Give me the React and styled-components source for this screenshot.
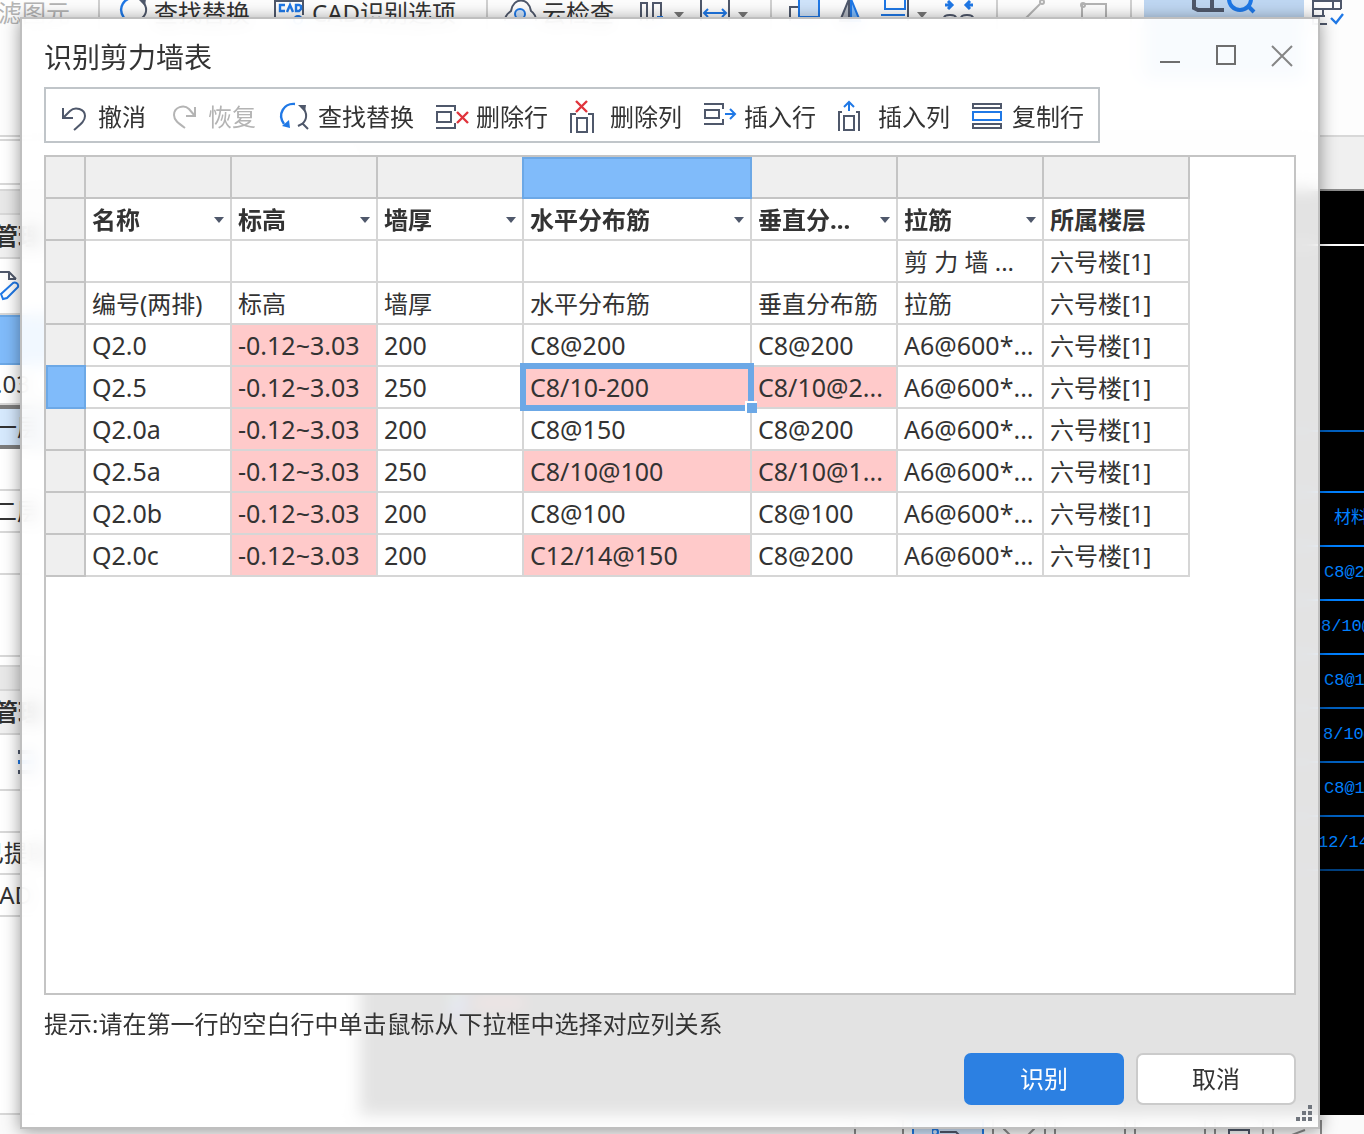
import React from "react";
import styled, { createGlobalStyle, css } from "styled-components";

const INK = "#333333";
const SLATE = "#4f586b";
const BLUE = "#1f78e6";
const RED = "#e0343c";
const FAINT = "#b4b4b4";

const GlobalStyle = createGlobalStyle`
  * {
    box-sizing: border-box;
  }
  body {
    margin: 0;
    color: ${INK};
    font: 24px/32px "Noto Sans", "Noto Sans CJK SC", sans-serif;
  }
  button, select {
    margin: 0;
    padding: 0;
    border: 0;
    background: none;
    color: inherit;
    font: inherit;
  }
`;

/* ---------- main window ---------- */

const Desktop = styled.div`
  position: relative;
  display: flex;
  flex-direction: column;
  height: 100vh;
  min-height: 900px;
  overflow: hidden;
  background: #fff;
`;

const Ribbon = styled.div`
  display: flex;
  align-items: flex-start;
  height: 137px;
  flex: none;
  border-bottom: 2px solid #d8d8d8;
  background: #fdfdfd;
`;

const RibbonButton = styled.button`
  display: flex;
  flex: none;
  align-items: center;
  gap: 4px;
  height: 26px;
  margin-left: ${({ $gap }) => $gap}px;
  color: ${({ disabled }) => (disabled ? FAINT : INK)};
  white-space: nowrap;
`;

const RibbonRule = styled.span`
  flex: none;
  width: 2px;
  height: 80px;
  margin-left: ${({ $gap }) => $gap}px;
  background: #d0d0d0;
`;

const RibbonActive = styled.button`
  display: flex;
  flex: none;
  justify-content: center;
  width: 160px;
  height: 80px;
  margin-left: 12px;
  background: #bfd7f2;
`;

const Workspace = styled.div`
  display: flex;
  flex: 1;
  min-height: 0;
`;

const Side = styled.div`
  display: flex;
  flex: none;
  flex-direction: column;
  width: 392px;
  margin-left: -32px;
`;

const sideTones = {
  plain: "#fff",
  bar: "#e8e8e8",
  head: "#f0f0f0",
  picked: "#80bbfa",
  current: "#d6e9fd"
};

const SideRow = styled.div`
  display: flex;
  align-items: center;
  flex: none;
  height: ${({ $h }) => $h}px;
  padding-left: ${({ $pad }) => $pad || 0}px;
  border-bottom: 2px solid #d8d8d8;
  background: ${({ $tone }) => sideTones[$tone || "plain"]};
  font-weight: ${({ $tone }) => ($tone === "head" ? 700 : 400)};
  white-space: nowrap;
  ${({ $tone }) =>
    $tone === "picked" && css`border: 2px solid #6ca8e6;`}
  ${({ $tone }) =>
    $tone === "current" &&
    css`
      border-top: 4px solid #7d7d7d;
      border-bottom: 4px solid #7d7d7d;
    `}
`;

const SideFill = styled.div`
  flex: 1;
  border-bottom: 2px solid #d8d8d8;
`;

const Main = styled.div`
  display: flex;
  flex: 1;
  flex-direction: column;
  min-width: 0;
`;

const TabStrip = styled.div`
  flex: none;
  height: 54px;
  border-bottom: 2px solid #8c8c8c;
  background: #f0f0f0;
`;

const Canvas = styled.div`
  position: relative;
  flex: 1;
  overflow: hidden;
  background: #000;
  color: #0080ff;
  font: 17px/20px "Liberation Mono", "Noto Sans CJK SC", monospace;
`;

const CanvasRow = styled.div`
  display: flex;
  align-items: center;
  justify-content: flex-end;
  height: ${({ $h }) => $h}px;
  border-bottom: 2px solid ${({ $line }) => $line || "#0080ff"};
`;

const CanvasText = styled.span`
  width: ${({ $w }) => $w}px;
  white-space: nowrap;
`;

const Axis = styled.svg`
  position: absolute;
  left: 80px;
  bottom: 86px;
`;

const StatusBar = styled.div`
  display: flex;
  flex: none;
  align-items: flex-end;
  justify-content: flex-end;
  gap: 8px;
  height: 19px;
  padding-right: 42px;
  background: #fafafa;
`;

const StatusButton = styled.button`
  display: flex;
  justify-content: center;
  width: ${({ $w }) => $w}px;
  height: 14px;
  border: 2px solid ${({ $on }) => ($on ? BLUE : "#8a8a8a")};
  border-width: 0 2px;
  background: ${({ $on }) => ($on ? "#cfe3fa" : "transparent")};
`;

/* ---------- dialog ---------- */

const Dialog = styled.section`
  position: absolute;
  top: 17px;
  right: 44px;
  bottom: 5px;
  left: 20px;
  display: flex;
  flex-direction: column;
  padding: 0 22px 22px;
  border: 2px solid #bfbfbf;
  background: rgba(255, 255, 255, 0.89);
  backdrop-filter: blur(8px);
  box-shadow: 0 2px 16px rgba(0, 0, 0, 0.4);
`;

const TitleBar = styled.header`
  display: flex;
  align-items: center;
  justify-content: space-between;
  flex: none;
  height: 68px;
  padding-top: 6px;
`;

const Title = styled.h1`
  margin: 0;
  padding-top: 2px;
  font-size: 28px;
  font-weight: 400;
  line-height: 36px;
`;

const WindowButtons = styled.div`
  display: flex;
  gap: 32px;
  padding-right: 2px;
`;

const WindowButton = styled.button`
  width: 24px;
  height: 24px;
  svg {
    display: block;
  }
`;

const Toolbar = styled.div`
  display: flex;
  align-self: flex-start;
  align-items: center;
  flex: none;
  gap: 22px;
  height: 56px;
  padding: 0 14px 0 12px;
  border: 2px solid #c0c5c9;
  background: #fff;
`;

const Tool = styled.button`
  display: flex;
  align-items: center;
  gap: 8px;
  color: ${({ disabled }) => (disabled ? FAINT : INK)};
  white-space: nowrap;
  svg {
    flex: none;
    overflow: visible;
  }
`;

const ToolLabel = styled.span`
  padding-top: 4px;
`;

const GridBox = styled.div`
  flex: 1;
  min-height: 0;
  margin-top: 12px;
  overflow: hidden;
  border: 2px solid #c4c4c4;
  background: #fff;
`;

const Table = styled.table`
  width: 1144px;
  border-spacing: 0;
  border-collapse: separate;
  table-layout: fixed;
  text-align: left;
`;

const pickedFrame = css`
  background: #80bbfa;
  &::after {
    content: "";
    position: absolute;
    inset: ${({ $picked }) =>
      $picked === "column" ? "0 -2px -2px" : "-2px -2px -2px 0"};
    z-index: 1;
    border: 2px solid #6ca8e6;
  }
`;

const Stub = styled.th`
  position: relative;
  height: 42px;
  padding: 0;
  border: 0 solid #c4c4c4;
  border-width: 0 2px 2px 0;
  background: #efefef;
  ${({ $picked }) => $picked && pickedFrame}
`;

const Cell = styled.td`
  position: relative;
  height: 42px;
  padding: ${({ $latin }) => ($latin ? 0 : 2)}px 0 0 6px;
  border: 0 solid #d6d6d6;
  border-width: 0 2px 2px 0;
  background: ${({ $bad }) => ($bad ? "#ffcaca" : "#fff")};
  font-size: ${({ $latin }) => ($latin ? 25 : 24)}px;
  font-weight: ${({ as }) => (as === "th" ? 700 : 400)};
  white-space: nowrap;
`;

const Frame = styled.span`
  position: absolute;
  inset: -4px;
  z-index: 2;
  border: 6px solid #6ca8e6;
  &::after {
    content: "";
    position: absolute;
    right: -9px;
    bottom: -8px;
    width: 10px;
    height: 10px;
    border: 0 solid #fff;
    border-width: 2px 0 0 2px;
    background: #6ca8e6;
  }
`;

const Picker = styled.select`
  display: block;
  width: 100%;
  height: 38px;
  appearance: none;
  outline: 0;
  font-weight: 700;
`;

const Caret = styled.svg`
  position: absolute;
  top: 18px;
  right: 6px;
  pointer-events: none;
`;

const Hint = styled.p`
  display: flex;
  align-items: center;
  flex: none;
  height: 58px;
  margin: 0;
`;

const Actions = styled.footer`
  display: flex;
  flex: none;
  justify-content: flex-end;
  gap: 12px;
`;

const ActionButton = styled.button`
  width: 160px;
  height: 52px;
  border: 2px solid ${({ $primary }) => ($primary ? "#2c80e2" : "#cbcbcb")};
  border-radius: 7px;
  background: ${({ $primary }) => ($primary ? "#2c80e2" : "#fff")};
  color: ${({ $primary }) => ($primary ? "#fff" : INK)};
`;

const Grip = styled.svg`
  position: absolute;
  right: 6px;
  bottom: 6px;
`;

/* ---------- icons ---------- */

const Icon = ({ w = 32, h = 32, children, color = SLATE }) => (
  <svg
    width={w}
    height={h}
    viewBox={`0 0 ${w} ${h}`}
    fill="none"
    stroke={color}
    strokeWidth="2"
    aria-hidden="true"
  >
    {children}
  </svg>
);

const UndoIcon = () => (
  <Icon>
    <path d="M5 9v10h10M5 19l7-7c5-5 15-2 15 5 0 5-4 8-11 14" />
  </Icon>
);

const RedoIcon = () => (
  <Icon color={FAINT}>
    <path d="M27 8v9h-9M27 17l-6-7c-5-5-15-2-15 6 0 5 4 8 11 13" />
  </Icon>
);

const FindIcon = () => (
  <Icon>
    <path d="M17 5C6 4-1 15 6 25" stroke={BLUE} strokeWidth="2.4" />
    <path d="M4 27l8 2-1-8z" fill={BLUE} stroke="none" />
    <path d="M20 6h8l-1 7z" fill={SLATE} stroke="none" />
    <path d="M24 8c6 6 5 13 0 17l-4 2M24 24l6 6" />
  </Icon>
);

const DeleteRowIcon = () => (
  <Icon>
    <path d="M0 7h19v5M0 29h19v-5M1 13h14v10H1z" />
    <path d="M21 13l11 11M32 13L21 24" stroke={RED} strokeWidth="2.4" />
  </Icon>
);

const DeleteColumnIcon = () => (
  <Icon>
    <path d="M1 34V15h5M23 34V15h-5M7 19h10v14H7z" />
    <path d="M6 2l11 11M17 2L6 13" stroke={RED} strokeWidth="2.4" />
  </Icon>
);

const InsertRowIcon = () => (
  <Icon>
    <path d="M0 5h19v5M0 25h19v-5M1 11h14v8H1z" />
    <path d="M21 15h9M26 10l5 5-5 5" stroke={BLUE} />
  </Icon>
);

const InsertColumnIcon = () => (
  <Icon>
    <path d="M1 32V13h3M21 32V13h-3M6 17h10v14H6z" />
    <path d="M11 12V3M6 8l5-5 5 5" stroke={BLUE} />
  </Icon>
);

const CopyRowIcon = () => (
  <Icon>
    <path d="M1 5h28v4H1zM1 25h28v4H1z" />
    <path d="M1 13h28v8H1z" stroke={BLUE} />
  </Icon>
);

const DropArrow = () => (
  <svg width="10" height="24" aria-hidden="true">
    <path d="M0 11h10l-5 6z" fill="#777" />
  </svg>
);

/* ---------- data ---------- */

const tools = [
  ["撤消", UndoIcon],
  ["恢复", RedoIcon, true],
  ["查找替换", FindIcon],
  ["删除行", DeleteRowIcon],
  ["删除列", DeleteColumnIcon],
  ["插入行", InsertRowIcon],
  ["插入列", InsertColumnIcon],
  ["复制行", CopyRowIcon]
];

const columns = [
  "名称",
  "标高",
  "墙厚",
  "水平分布筋",
  "垂直分...",
  "拉筋",
  "所属楼层"
];

const FLOOR = "六号楼[1]";
const LEVEL = "-0.12~3.03";
const TIE = "A6@600*...";

// bad: column indexes whose value could not be parsed
const rows = [
  { cells: ["", "", "", "", "", "剪 力 墙 ...", FLOOR] },
  {
    cells: ["编号(两排)", "标高", "墙厚", "水平分布筋", "垂直分布筋", "拉筋", FLOOR]
  },
  { cells: ["Q2.0", LEVEL, "200", "C8@200", "C8@200", TIE, FLOOR], bad: [1] },
  {
    cells: ["Q2.5", LEVEL, "250", "C8/10-200", "C8/10@2...", TIE, FLOOR],
    bad: [1, 3, 4],
    active: 3
  },
  { cells: ["Q2.0a", LEVEL, "200", "C8@150", "C8@200", TIE, FLOOR], bad: [1] },
  {
    cells: ["Q2.5a", LEVEL, "250", "C8/10@100", "C8/10@1...", TIE, FLOOR],
    bad: [1, 3, 4]
  },
  { cells: ["Q2.0b", LEVEL, "200", "C8@100", "C8@100", TIE, FLOOR], bad: [1] },
  {
    cells: ["Q2.0c", LEVEL, "200", "C12/14@150", "C8@200", TIE, FLOOR],
    bad: [1, 3]
  }
];

const drawing = [
  ["材料", 30, 54],
  ["C8@2", 40, 54],
  ["8/10@", 43, 54],
  ["C8@1", 40, 54, "#0060c0"],
  ["8/10@", 41, 54, "#0060c0"],
  ["C8@1", 40, 54, "#0060c0"],
  ["12/14", 46, 54, "#004080"]
];

const isLatin = text => /^[\x20-\x7e]+$/.test(text);

/* ---------- parts ---------- */

const MainRibbon = () => (
  <Ribbon>
    <RibbonButton $gap={-26} disabled>
      过滤图元
    </RibbonButton>
    <RibbonRule $gap={28} />
    <RibbonButton $gap={18}>
      <Icon>
        <path d="M17 1C6 0-1 11 6 21" stroke={BLUE} strokeWidth="2.4" />
        <path d="M20 2h8l-1 7z" fill={SLATE} stroke="none" />
        <path d="M24 4c6 6 5 13 0 17" />
      </Icon>
      查找替换
    </RibbonButton>
    <RibbonButton $gap={24}>
      <Icon w={34}>
        <path d="M1 22V4h28v14" />
        <path
          d="M11 8H6v6h5M13 15l3-7 3 7M22 8v6h3l2-2V9l-2-1z"
          stroke={BLUE}
          strokeWidth="2.4"
        />
        <circle cx="24" cy="23" r="4" stroke={BLUE} />
      </Icon>
      CAD识别选项
    </RibbonButton>
    <RibbonRule $gap={30} />
    <RibbonButton $gap={16}>
      <Icon w={34}>
        <path d="M1 24c0-7 4-8 6-10C9 0 25 0 27 14c3 2 5 4 5 10" />
        <circle cx="16" cy="17" r="5" stroke={BLUE} fill="#cfe3fa" />
      </Icon>
      云检查
    </RibbonButton>
    <RibbonButton $gap={26} aria-label="复制">
      <Icon w={24}>
        <path d="M1 24V6h6v18M13 24V6h8v14" />
        <path d="M17 20h6" stroke={BLUE} />
      </Icon>
    </RibbonButton>
    <RibbonButton $gap={10} aria-label="更多">
      <DropArrow />
    </RibbonButton>
    <RibbonButton $gap={16} aria-label="延伸">
      <Icon w={30}>
        <path d="M1 0v24M29 0v24" />
        <path d="M4 16h22M8 12l-4 4 4 4M22 12l4 4-4 4" stroke={BLUE} />
      </Icon>
    </RibbonButton>
    <RibbonButton $gap={8} aria-label="更多">
      <DropArrow />
    </RibbonButton>
    <RibbonRule $gap={22} />
    <RibbonButton $gap={17} aria-label="移动">
      <Icon w={32}>
        <path d="M1 24V10h8" />
        <path d="M10 0v20h20V0" stroke={BLUE} fill="#cfe3fa" />
      </Icon>
    </RibbonButton>
    <RibbonButton $gap={18} aria-label="镜像">
      <Icon w={24}>
        <path d="M10 2v22H1z" fill="#b4b9c2" />
        <path d="M12 2v22h9z" stroke={BLUE} fill="#80bbfa" />
      </Icon>
    </RibbonButton>
    <RibbonButton $gap={18} aria-label="对齐">
      <Icon w={28}>
        <path d="M4 0v12h20V0M0 18h24" stroke={BLUE} />
        <path d="M27 0v24" />
      </Icon>
    </RibbonButton>
    <RibbonButton $gap={8} aria-label="更多">
      <DropArrow />
    </RibbonButton>
    <RibbonButton $gap={16} aria-label="合并">
      <Icon w={32}>
        <path
          d="M2 8h6M30 8h-6M5 4l4 4-4 4M27 4l-4 4 4 4"
          stroke={BLUE}
          strokeWidth="3"
        />
        <path d="M1 21c0-4 12-4 12 0M18 21c0-4 12-4 12 0" />
      </Icon>
    </RibbonButton>
    <RibbonRule $gap={21} />
    <RibbonButton $gap={24} disabled aria-label="直线">
      <Icon w={24} color={FAINT}>
        <path d="M1 24L18 7" />
        <circle cx="20" cy="5" r="2" />
      </Icon>
    </RibbonButton>
    <RibbonButton $gap={34} disabled aria-label="矩形">
      <Icon w={28} color={FAINT}>
        <path d="M2 24V7h24v17" />
        <circle cx="3" cy="8" r="2" />
      </Icon>
    </RibbonButton>
    <RibbonRule $gap={22} />
    <RibbonActive aria-label="识别剪力墙">
      <Icon w={64}>
        <path d="M2 0v8l4 2h26M20 0v10" strokeWidth="4" />
        <circle cx="48" cy="-1" r="11" stroke={BLUE} strokeWidth="4" />
        <path d="M56 6l6 6" stroke={BLUE} strokeWidth="4" />
      </Icon>
    </RibbonActive>
    <RibbonButton $gap={8} aria-label="校核">
      <Icon>
        <path d="M1 2v25h14M1 4h28v8M1 12h28M1 19h12M21 4v8M11 12v7" />
        <path d="M19 21l5 5 7-9" stroke={BLUE} strokeWidth="2.4" />
      </Icon>
    </RibbonButton>
  </Ribbon>
);

const SidePanel = () => (
  <Side>
    <SideRow $h={4} />
    <SideRow $h={44} />
    <SideRow $h={6} />
    <SideRow $h={24} $tone="bar" />
    <SideRow $h={44} $tone="head" $pad={26}>
      管理
    </SideRow>
    <SideRow $h={56} $pad={32}>
      <Icon>
        <path d="M0 2h9l7 7M9 2v7h7" />
        <path d="M1 24l2 5 4-1 11-11c1-4-3-5-5-4z" stroke={BLUE} />
      </Icon>
    </SideRow>
    <SideRow $h={50} $tone="picked" />
    <SideRow $h={40} $pad={28}>
      .03
    </SideRow>
    <SideRow $h={44} $tone="current" $pad={25}>
      一层
    </SideRow>
    <SideRow $h={42} />
    <SideRow $h={42} $pad={25}>
      二层
    </SideRow>
    <SideRow $h={42} />
    <SideRow $h={82} />
    <SideRow $h={10} />
    <SideRow $h={24} $tone="bar" />
    <SideRow $h={44} $tone="head" $pad={26}>
      管理
    </SideRow>
    <SideRow $h={56} $pad={50}>
      <Icon>
        <path d="M0 6h20M0 26h20" strokeWidth="4" />
        <path d="M0 16h20" stroke={BLUE} strokeWidth="4" />
      </Icon>
    </SideRow>
    <SideRow $h={42} />
    <SideRow $h={42} $pad={12}>
      已提取
    </SideRow>
    <SideRow $h={42} $pad={16}>
      CAD
    </SideRow>
    <SideFill />
  </Side>
);

const Drawing = () => (
  <Canvas>
    <CanvasRow $h={55} $line="#fff" />
    <CanvasRow $h={186} $line="#0060c0" />
    <CanvasRow $h={61} />
    {drawing.map(([text, w, h, line], i) => (
      <CanvasRow key={i} $h={h} $line={line}>
        <CanvasText $w={w}>{text}</CanvasText>
      </CanvasRow>
    ))}
    <Axis width="110" height="60" fill="none" strokeWidth="4">
      <path d="M14 50V4" stroke="#2fe02f" />
      <path d="M14 50L22 26" stroke="#3030ff" strokeWidth="8" />
      <path d="M34 34H84" stroke="#ff3030" strokeWidth="6" />
    </Axis>
  </Canvas>
);

const StatusIcons = () => (
  <StatusBar>
    <StatusButton $w={50} aria-label="捕捉" />
    <StatusButton $w={72} $on aria-label="正交">
      <Icon h={14}>
        <path d="M8 12h16l8 8" />
        <circle cx="3" cy="12" r="3" stroke={BLUE} />
      </Icon>
    </StatusButton>
    <StatusButton $w={54} aria-label="交点">
      <Icon h={14} color="#8a8a8a">
        <path d="M0 8l8 8M32 8l-8 8" />
      </Icon>
    </StatusButton>
    <StatusButton $w={72} aria-label="垂点" />
    <StatusButton $w={72} aria-label="中点" />
    <StatusButton $w={50} aria-label="顶点">
      <Icon w={24} h={14}>
        <path d="M2 14v-4h20v4" />
      </Icon>
    </StatusButton>
    <StatusButton $w={50} aria-label="坐标">
      <Icon w={24} h={14} color="#8a8a8a">
        <path d="M4 16l16-6" />
      </Icon>
    </StatusButton>
  </StatusBar>
);

const WallGrid = () => (
  <Table>
    <colgroup>
      <col style={{ width: 40 }} />
      {columns.map((name, i) => (
        <col key={name} style={{ width: i === 3 ? 228 : 146 }} />
      ))}
    </colgroup>
    <thead>
      <tr>
        <Stub />
        {columns.map((name, i) => (
          <Stub key={name} $picked={i === 3 ? "column" : undefined} />
        ))}
      </tr>
      <tr>
        <Stub />
        {columns.map((name, i) => (
          <Cell as="th" key={name}>
            {i === columns.length - 1 ? (
              name
            ) : (
              <>
                <Picker aria-label={name}>
                  <option>{name}</option>
                </Picker>
                <Caret width="10" height="6" aria-hidden="true">
                  <path d="M0 0h10L5 6z" fill={SLATE} />
                </Caret>
              </>
            )}
          </Cell>
        ))}
      </tr>
    </thead>
    <tbody>
      {rows.map(({ cells, bad = [], active }, r) => (
        <tr key={r}>
          <Stub $picked={active !== undefined ? "row" : undefined} />
          {cells.map((text, i) => (
            <Cell key={i} $bad={bad.includes(i)} $latin={isLatin(text)}>
              {text}
              {active === i && <Frame />}
            </Cell>
          ))}
        </tr>
      ))}
    </tbody>
  </Table>
);

const WallDialog = () => (
  <Dialog role="dialog" aria-labelledby="wall-title">
    <TitleBar>
      <Title id="wall-title">识别剪力墙表</Title>
      <WindowButtons>
        <WindowButton aria-label="最小化">
          <Icon w={24} h={24} color="#6e6e6e">
            <path d="M2 18h20" />
          </Icon>
        </WindowButton>
        <WindowButton aria-label="最大化">
          <Icon w={24} h={24} color="#6e6e6e">
            <path d="M3 2h18v18H3z" />
          </Icon>
        </WindowButton>
        <WindowButton aria-label="关闭">
          <Icon w={24} h={24} color="#858585">
            <path d="M2 2l20 20M22 2L2 22" />
          </Icon>
        </WindowButton>
      </WindowButtons>
    </TitleBar>
    <Toolbar>
      {tools.map(([label, Glyph, disabled]) => (
        <Tool key={label} disabled={disabled}>
          <Glyph />
          <ToolLabel>{label}</ToolLabel>
        </Tool>
      ))}
    </Toolbar>
    <GridBox>
      <WallGrid />
    </GridBox>
    <Hint>提示:请在第一行的空白行中单击鼠标从下拉框中选择对应列关系</Hint>
    <Actions>
      <ActionButton $primary>识别</ActionButton>
      <ActionButton>取消</ActionButton>
    </Actions>
    <Grip width="16" height="16" fill="#70757d" aria-hidden="true">
      <path d="M12 0h4v4h-4zM6 6h4v4H6zM12 6h4v4h-4zM0 12h4v4H0zM6 12h4v4H6zM12 12h4v4h-4z" />
    </Grip>
  </Dialog>
);

const App = () => (
  <Desktop>
    <GlobalStyle />
    <MainRibbon />
    <Workspace>
      <SidePanel />
      <Main>
        <TabStrip />
        <Drawing />
      </Main>
    </Workspace>
    <StatusIcons />
    <WallDialog />
  </Desktop>
);

export default App;
